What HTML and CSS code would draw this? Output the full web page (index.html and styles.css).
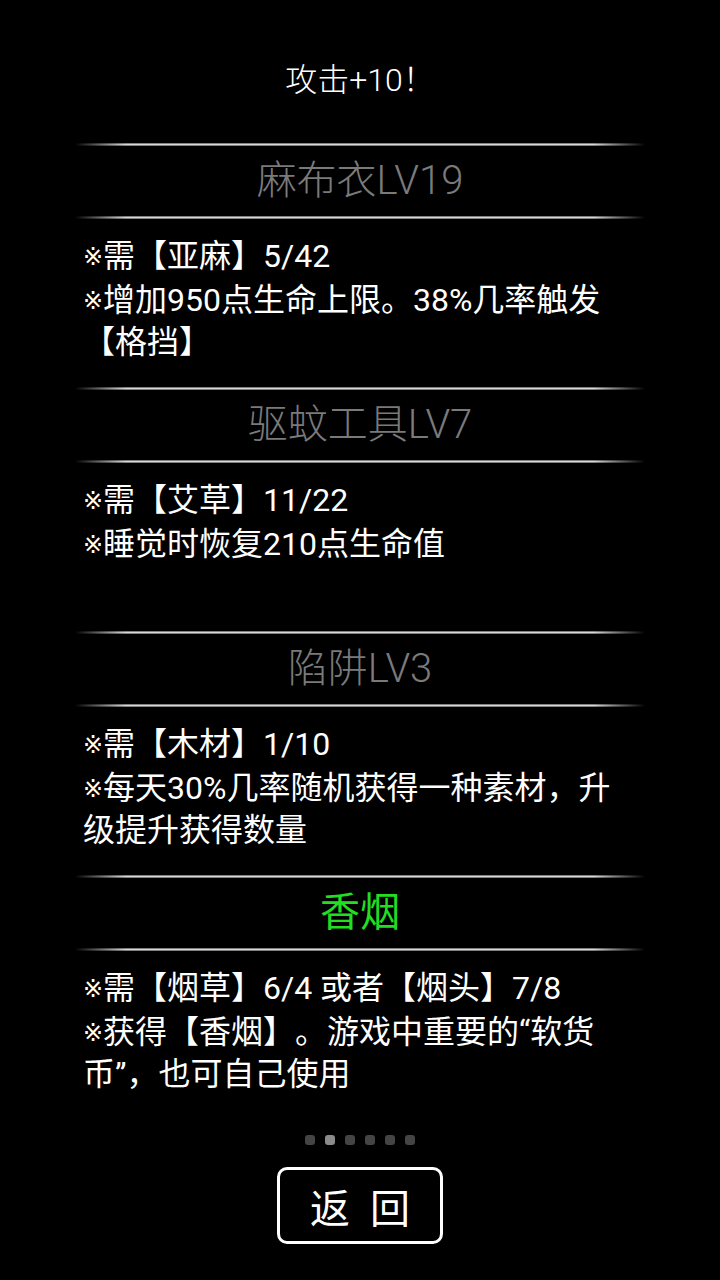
FILE: index.html
```html
<!DOCTYPE html>
<html lang="zh-CN">
<head>
  <meta charset="UTF-8">
  <meta name="viewport" content="width=device-width, initial-scale=1.0">
  <title>升级</title>
  <link rel="stylesheet" href="styles.css">
</head>
<body>
  <div class="screen">
    <div class="toast">攻击+10！</div>

    <div class="item-list">
      <div class="item">
        <div class="divider"></div>
        <div class="item-name">麻布衣LV19</div>
        <div class="divider"></div>
        <div class="item-body">
          <p><span class="mark">※</span>需【亚麻】5/42</p>
          <p><span class="mark">※</span>增加950点生命上限。38%几率触发【格挡】</p>
        </div>
      </div>

      <div class="item">
        <div class="divider"></div>
        <div class="item-name">驱蚊工具LV7</div>
        <div class="divider"></div>
        <div class="item-body">
          <p><span class="mark">※</span>需【艾草】11/22</p>
          <p><span class="mark">※</span>睡觉时恢复210点生命值</p>
        </div>
      </div>

      <div class="item">
        <div class="divider"></div>
        <div class="item-name">陷阱LV3</div>
        <div class="divider"></div>
        <div class="item-body">
          <p><span class="mark">※</span>需【木材】1/10</p>
          <p><span class="mark">※</span>每天30%几率随机获得一种素材，升级提升获得数量</p>
        </div>
      </div>

      <div class="item">
        <div class="divider"></div>
        <div class="item-name item-name-new">香烟</div>
        <div class="divider"></div>
        <div class="item-body">
          <p><span class="mark">※</span>需【烟草】6/4 或者【烟头】7/8</p>
          <p><span class="mark">※</span>获得【香烟】。游戏中重要的“软货币”，也可自己使用</p>
        </div>
      </div>
    </div>

    <div class="pager">
      <span class="dot"></span>
      <span class="dot active"></span>
      <span class="dot"></span>
      <span class="dot"></span>
      <span class="dot"></span>
      <span class="dot"></span>
    </div>

    <button class="back-btn"><span>返</span><span>回</span></button>
  </div>
</body>
</html>
```

FILE: styles.css
```css
body {
  margin: 0;
  background-color: #000;
  color: #fff;
  font-family: Roboto, "Noto Sans CJK SC", sans-serif;
}

.screen {
  width: 720px;
  height: 1280px;
  display: flex;
  flex-direction: column;
  align-items: center;
}

.toast {
  margin-top: 60px;
  font-size: 32px;
  line-height: 40px;
  font-weight: 300;
}

.item-list {
  margin-top: 43px;
  width: 100%;
}

.item {
  height: 244px;
}

/* thin silver rule that fades out at both ends */
.divider {
  height: 3px;
  margin: 0 75px;
  background:
    linear-gradient(to right, #000, rgba(0, 0, 0, 0) 9%, rgba(0, 0, 0, 0) 91%, #000),
    linear-gradient(to bottom, #555, #d8d8d8 50%, #555);
}

.item-name {
  height: 70px;
  line-height: 70px;
  text-align: center;
  font-size: 40px;
  font-weight: 300;
  color: #7a7a7a;
}

.item-name-new {
  color: #22dd22;
  font-weight: 400;
}

.item-body {
  height: 168px;
  padding: 16px 100px 0 83px;
  box-sizing: border-box;
  font-size: 32px;
  line-height: 42px;
  text-spacing-trim: space-all;
}

.item-body p {
  margin: 0 0 2px;
}

.mark {
  display: inline-block;
  width: 20px;
  font-family: "DejaVu Sans", sans-serif;
  font-size: 24px;
  line-height: 24px;
  vertical-align: 2px;
}

.pager {
  display: flex;
  gap: 10px;
  margin-top: 16px;
}

.dot {
  width: 10px;
  height: 10px;
  border-radius: 3px;
  background-color: #444;
}

.dot.active {
  background-color: #8a8a8a;
}

.back-btn {
  margin-top: 22px;
  width: 166px;
  height: 77px;
  border: 3px solid #fff;
  border-radius: 10px;
  background-color: #000;
  color: #fff;
  font-family: "Noto Sans CJK SC", sans-serif;
  font-size: 40px;
  display: flex;
  justify-content: center;
  align-items: center;
  gap: 20px;
  padding: 0;
}
```
